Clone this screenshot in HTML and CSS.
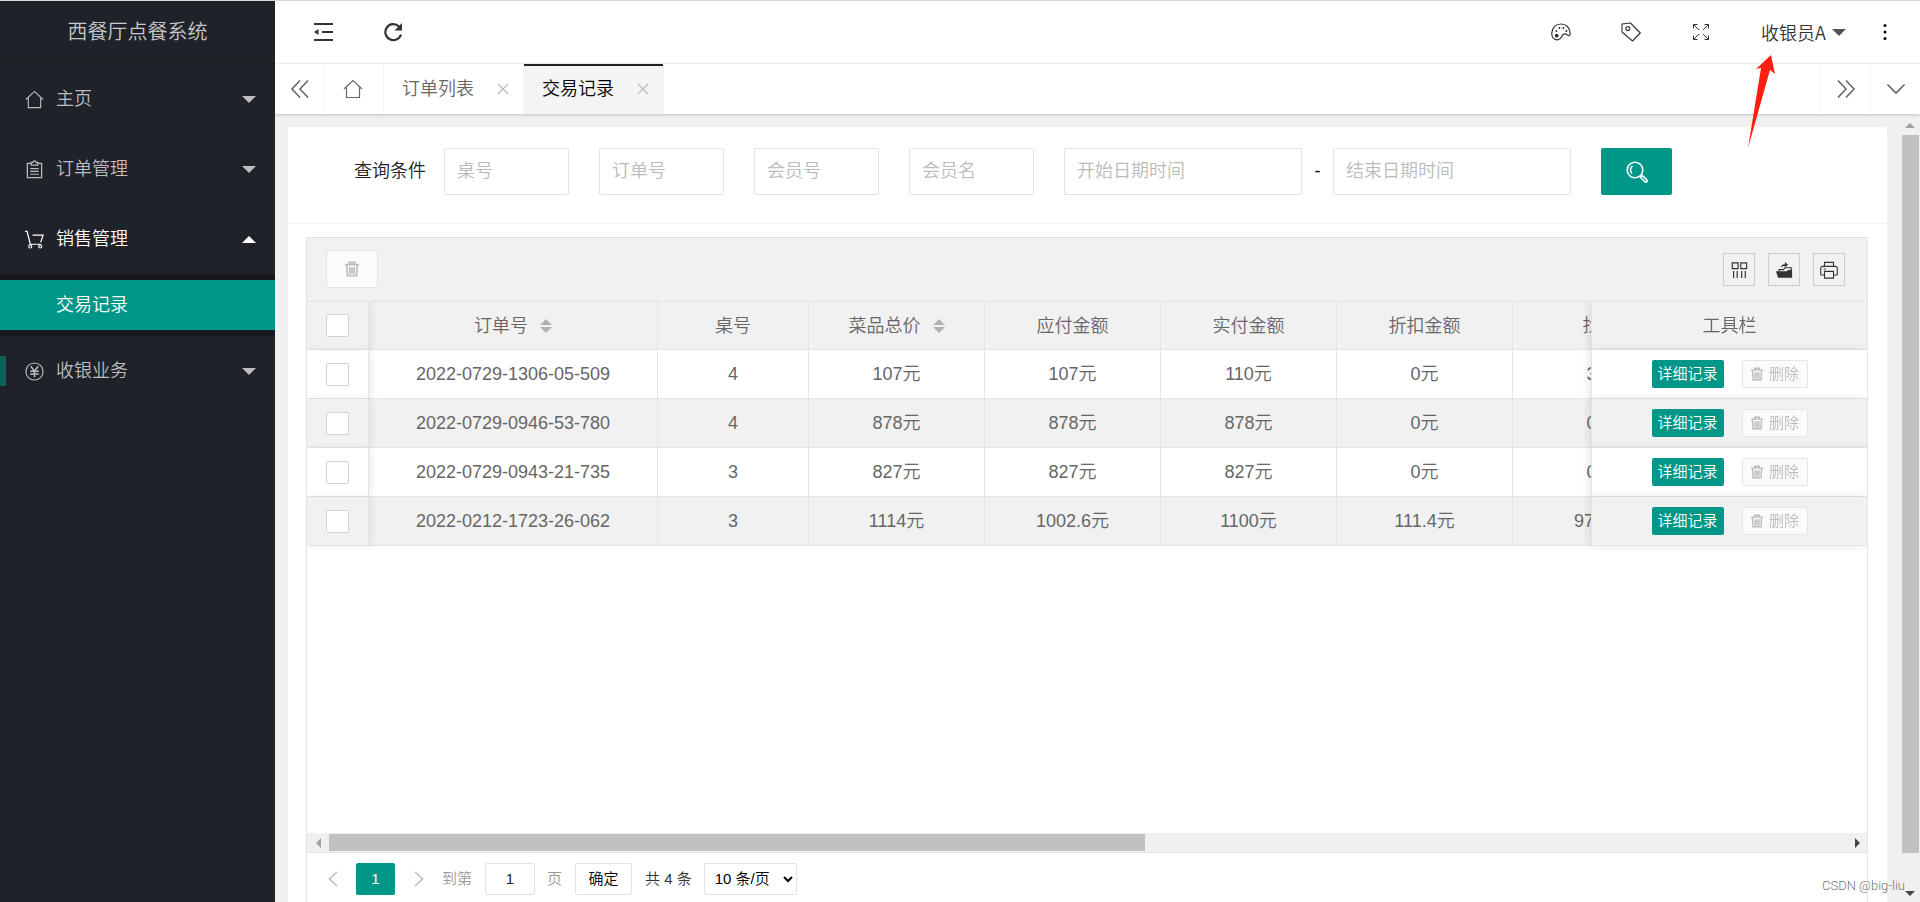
FILE: index.html
```html
<!DOCTYPE html>
<html lang="zh-CN">
<head>
<meta charset="utf-8">
<title>西餐厅点餐系统</title>
<link rel="stylesheet" href="styles.css">
</head>
<body>
<svg class="sprite" aria-hidden="true">
  <symbol id="trash" viewBox="0 0 16 16"><path d="M1 3.600h14M5.400 3.200V1.400h5.200v1.800M2.800 4l.6 10.600h9.200L13.200 4M5.800 6v7M8 6v7M10.200 6v7" fill="none" stroke="currentColor" stroke-width="1.600"/></symbol>
  <symbol id="house" viewBox="0 0 20 20"><path d="M1 10 10 1.500 19 10M3.500 8.500V18.500h13V8.500" fill="none" stroke="currentColor" stroke-width="1.200"/></symbol>
  <symbol id="cross" viewBox="0 0 12 12"><path d="M1 1l10 10M11 1 1 11" fill="none" stroke="currentColor" stroke-width="1.200"/></symbol>
  <symbol id="sort" viewBox="0 0 12 14"><path d="M0 6 6 0l6 6zM0 8h12l-6 6z" fill="currentColor"/></symbol>
</svg>

<aside class="side">
  <div class="logo">西餐厅点餐系统</div>
  <nav class="menu">
    <a class="item" href="#"><svg class="item-icon"><use href="#house"/></svg><span>主页</span><i class="caret"></i></a>
    <a class="item" href="#"><svg class="item-icon" viewBox="0 0 20 20"><path d="M6.500 3.500h-4v15h15v-15h-4M6.500 5.500v-3h2a1.500 1.500 0 0 1 3 0h2v3zM5.500 9h9M5.500 12h9M5.500 15h9" fill="none" stroke="currentColor" stroke-width="1.300"/></svg><span>订单管理</span><i class="caret"></i></a>
    <a class="item open" href="#"><svg class="item-icon" viewBox="0 0 20 20"><path d="M0 1.500h2.200L5.500 15h11M8 5.500h11L16.500 13" fill="none" stroke="currentColor" stroke-width="1.300"/><circle cx="5.500" cy="17.300" r="1.600" fill="none" stroke="currentColor" stroke-width="1.200"/><circle cx="16" cy="17.300" r="1.600" fill="none" stroke="currentColor" stroke-width="1.200"/></svg><span>销售管理</span><i class="caret up"></i></a>
    <div class="submenu"><a class="sub-item" href="#">交易记录</a></div>
    <a class="item marked" href="#"><svg class="item-icon" viewBox="0 0 20 20"><circle cx="10" cy="10" r="9" fill="none" stroke="currentColor" stroke-width="1.200"/><path d="M6 4.500l4 5 4-5M10 9.500V16M5.500 9.800h9M5.500 12.600h9" fill="none" stroke="currentColor" stroke-width="1.500"/></svg><span>收银业务</span><i class="caret"></i></a>
  </nav>
</aside>

<div class="main">
  <header class="header">
    <div class="tools">
      <button class="tool" aria-label="收起菜单"><svg viewBox="0 0 20 20"><path d="M1 2h19M9 10h11M1 18h19" stroke="currentColor" stroke-width="2.200"/><path d="M1 10l4.500-3v6z" fill="currentColor"/></svg></button>
      <button class="tool" aria-label="刷新"><svg viewBox="0 0 20 20"><path d="M18 12.500A8 8 0 1 1 16 4.500" fill="none" stroke="currentColor" stroke-width="2.200"/><path d="M19 1v7.500h-7.500z" fill="currentColor"/></svg></button>
    </div>
    <div class="tools">
      <button class="tool" aria-label="主题"><svg viewBox="0 0 20 20"><path d="M6 17.800C2 17.500.6 14.500.8 11 1.100 5.500 5 2 10 2s9 3.500 9.200 9.500c0 2.600-1.600 2.600-2.600 1.600-1.700-1.700-4-1.600-5 0-1 1.800-1.600 4.900-5.600 4.700z" fill="none" stroke="currentColor" stroke-width="1.200"/><circle cx="5.700" cy="13.700" r="1.900" fill="currentColor"/><circle cx="5.400" cy="9" r="1" fill="currentColor"/><circle cx="8.400" cy="6" r="1" fill="currentColor"/><circle cx="12.300" cy="6" r="1" fill="currentColor"/><circle cx="15.400" cy="9" r="1" fill="currentColor"/></svg></button>
      <button class="tool" aria-label="便签"><svg viewBox="0 0 20 20"><path d="M1 2 9.500 1 19.300 11l-7.800 8L1 10z" fill="none" stroke="currentColor" stroke-width="1.100" stroke-linejoin="round"/><circle cx="6.800" cy="6.600" r="2" fill="none" stroke="currentColor" stroke-width="1.100"/></svg></button>
      <button class="tool" aria-label="全屏"><svg viewBox="0 0 20 20"><path d="M8 8 2.500 2.500M2.500 6.500v-4h4M12 8l5.500-5.500M13.500 2.500h4v4M8 12l-5.500 5.500M2.500 13.500v4h4M12 12l5.500 5.500M13.500 17.500h4v-4" fill="none" stroke="currentColor" stroke-width="1"/></svg></button>
      <button class="user">收银员A<i class="caret"></i></button>
      <button class="more" aria-label="更多"><svg viewBox="0 0 4 20"><circle cx="2" cy="3.500" r="1.500"/><circle cx="2" cy="10" r="1.500"/><circle cx="2" cy="16.500" r="1.500"/></svg></button>
    </div>
  </header>

  <div class="tabs">
    <button class="tab-ctl" aria-label="向左"><svg viewBox="0 0 20 20"><path d="M10 1.500 2 10l8 8.500M18 1.500 10 10l8 8.500" fill="none" stroke="currentColor" stroke-width="1.600"/></svg></button>
    <a class="tab home" href="#" aria-label="首页"><svg><use href="#house"/></svg></a>
    <a class="tab" href="#">订单列表<svg class="close"><use href="#cross"/></svg></a>
    <a class="tab active" href="#">交易记录<svg class="close"><use href="#cross"/></svg></a>
    <button class="tab-ctl first-right" aria-label="向右"><svg viewBox="0 0 20 20"><path d="M2 1.500 10 10l-8 8.500M10 1.500 18 10l-8 8.500" fill="none" stroke="currentColor" stroke-width="1.600"/></svg></button>
    <button class="tab-ctl right" aria-label="展开"><svg viewBox="0 0 20 20"><path d="M1.500 5.500 10 14l8.500-8.500" fill="none" stroke="currentColor" stroke-width="1.600"/></svg></button>
  </div>

  <div class="content">
    <div class="card">
      <form class="search">
        <label for="desk">查询条件</label>
        <input class="field" id="desk" placeholder="桌号">
        <input class="field" aria-label="订单号" placeholder="订单号">
        <input class="field" aria-label="会员号" placeholder="会员号">
        <input class="field" aria-label="会员名" placeholder="会员名">
        <div class="range">
          <input class="field" aria-label="开始日期时间" placeholder="开始日期时间">
          <span class="dash">-</span>
          <input class="field" aria-label="结束日期时间" placeholder="结束日期时间">
        </div>
        <button class="search-btn" type="button" aria-label="查询"><svg viewBox="0 0 22 22"><circle cx="9" cy="9" r="7.800" fill="none" stroke="currentColor" stroke-width="1.600"/><path d="M6.500 5A5 5 0 0 0 6 12.500" fill="none" stroke="currentColor" stroke-width="1.500"/><path d="M15.800 15.800l4 4" stroke="currentColor" stroke-width="4.200" stroke-linecap="round"/><path d="M16.300 16.300l3.400 3.400" stroke="#009688" stroke-width="1.200" stroke-linecap="round"/></svg></button>
      </form>

      <div class="view">
        <div class="bar">
          <button class="del-all" disabled aria-label="删除所选"><svg><use href="#trash"/></svg></button>
          <div class="bar-tools">
            <button class="box" aria-label="筛选列"><svg viewBox="0 0 20 20"><path d="M2.500 2h6.500v6.500H2.500zM12 2h6.500v6.500H12zM4 11v8M8 11v8M13 11v8M17 11v8" fill="none" stroke="currentColor" stroke-width="1.300"/></svg></button>
            <button class="box" aria-label="导出"><svg viewBox="0 0 20 20"><path d="M1 11.500h12l1.500-1.500H19v8.500H3.500z" fill="currentColor"/><path d="M4.500 11.500V9.500h5l1.500-2h7V11" fill="none" stroke="currentColor" stroke-width="1.300"/><path d="M6.500 7.500c.3-3 2-4 4.500-4V1l3.500 3.200L11 7.200V5.500c-2 0-3.500.5-4.500 2z" fill="currentColor"/></svg></button>
            <button class="box" aria-label="打印"><svg viewBox="0 0 20 20"><path d="M5 6V1.500h10V6M5 15.500H1.500A1 1 0 0 1 .8 15V8A2 2 0 0 1 3 6h14a2 2 0 0 1 2.200 2v7a1 1 0 0 1-.7.500H15M5 11.500h10V19H5zM4 8.800h2.500" fill="none" stroke="currentColor" stroke-width="1.200"/></svg></button>
          </div>
        </div>

        <div class="scroller">
          <table class="grid">
            <colgroup><col class="c-check"><col class="c-order"><col class="c-desk"><col class="c-sum"><col class="c-sum"><col class="c-sum"><col class="c-sum"><col class="c-sum"><col class="c-act"></colgroup>
            <thead>
              <tr><th class="pin-left"><input type="checkbox" aria-label="全选"></th><th>订单号<svg class="sort"><use href="#sort"/></svg></th><th>桌号</th><th>菜品总价<svg class="sort"><use href="#sort"/></svg></th><th>应付金额</th><th>实付金额</th><th>折扣金额</th><th>找零</th><th class="pin-right">工具栏</th></tr>
            </thead>
            <tbody>
              <tr><td class="pin-left"><input type="checkbox" aria-label="选择第1行"></td><td>2022-0729-1306-05-509</td><td>4</td><td>107元</td><td>107元</td><td>110元</td><td>0元</td><td>3元</td><td class="pin-right"><div class="acts"><button class="detail">详细记录</button><button class="del" disabled><svg><use href="#trash"/></svg>删除</button></div></td></tr>
              <tr><td class="pin-left"><input type="checkbox" aria-label="选择第2行"></td><td>2022-0729-0946-53-780</td><td>4</td><td>878元</td><td>878元</td><td>878元</td><td>0元</td><td>0元</td><td class="pin-right"><div class="acts"><button class="detail">详细记录</button><button class="del" disabled><svg><use href="#trash"/></svg>删除</button></div></td></tr>
              <tr><td class="pin-left"><input type="checkbox" aria-label="选择第3行"></td><td>2022-0729-0943-21-735</td><td>3</td><td>827元</td><td>827元</td><td>827元</td><td>0元</td><td>0元</td><td class="pin-right"><div class="acts"><button class="detail">详细记录</button><button class="del" disabled><svg><use href="#trash"/></svg>删除</button></div></td></tr>
              <tr><td class="pin-left"><input type="checkbox" aria-label="选择第4行"></td><td>2022-0212-1723-26-062</td><td>3</td><td>1114元</td><td>1002.6元</td><td>1100元</td><td>111.4元</td><td>97.4元</td><td class="pin-right"><div class="acts"><button class="detail">详细记录</button><button class="del" disabled><svg><use href="#trash"/></svg>删除</button></div></td></tr>
            </tbody>
          </table>
        </div>

        <div class="hbar"><i class="arr left"></i><div class="rail"><div class="thumb"></div></div><i class="arr right"></i></div>

        <div class="pager">
          <button class="step" aria-label="上一页"><svg viewBox="0 0 10 16"><path d="M9 1 1.500 8 9 15" fill="none" stroke="currentColor" stroke-width="1.500"/></svg></button>
          <span class="page">1</span>
          <button class="step" aria-label="下一页"><svg viewBox="0 0 10 16"><path d="M1 1l7.500 7L1 15" fill="none" stroke="currentColor" stroke-width="1.500"/></svg></button>
          <label class="dim" for="goto">到第</label>
          <input class="goto" id="goto" value="1">
          <span class="dim">页</span>
          <button class="confirm">确定</button>
          <span class="total">共 4 条</span>
          <select class="size" aria-label="每页条数"><option>10 条/页</option></select>
        </div>
      </div>
    </div>
    <div class="vbar"><i class="arr up"></i><div class="vthumb"></div><i class="arr down"></i></div>
  </div>
</div>

<svg class="pointer" viewBox="0 0 28 94" aria-hidden="true"><path d="M24 0 28 19 23 15 1 93 14 13 9 14z" fill="#ff1f10"/></svg>
<div class="mark">CSDN @big-liu</div>
</body>
</html>
```
FILE: styles.css
```css
* { box-sizing: border-box; }
body {
  margin: 0;
  height: 100vh;
  display: flex;
  overflow: hidden;
  border-top: 1px solid #d8d8d8;
  background: #f0f0f0;
  color: #333;
  font: 350 18px/24px "Liberation Sans", "Noto Sans CJK SC", sans-serif;
}
button, input, select { font: inherit; color: inherit; margin: 0; }
button { padding: 0; border: 0; background: none; }
a { color: inherit; text-decoration: none; }
svg { display: block; flex: none; }
.sprite { position: absolute; width: 0; height: 0; }

.caret {
  border: 7px solid transparent;
  border-top-color: currentColor;
  border-bottom-width: 0;
}
.caret.up { border-top-width: 0; border-bottom: 7px solid currentColor; }

.side { width: 275px; flex: none; background: #20222a; color: #bcbdbf; }
.logo {
  height: 63px;
  display: flex;
  align-items: center;
  justify-content: center;
  font-size: 20px;
  color: #c8c9cb;
  border-bottom: 1px solid #1a1c22;
}
.item { display: flex; align-items: center; gap: 12px; height: 70px; padding: 0 19px 0 25px; }
.item .caret { margin-left: auto; }
.item-icon { width: 19px; height: 19px; }
.open { color: #fff; }
.marked { background: linear-gradient(#10605c, #10605c) 0 50% / 6px 30px no-repeat; }
.submenu { padding: 6px 0; background: #16181d; }
.sub-item { display: flex; align-items: center; height: 50px; padding-left: 56px; background: #009688; color: #fff; }

.main { flex: 1; min-width: 0; display: flex; flex-direction: column; }
.header { display: flex; justify-content: space-between; height: 63px; flex: none; padding: 0 10px 0 13px; background: #fff; border-bottom: 1px solid #f4f4f4; }
.tools { display: flex; align-items: center; }
.tool { width: 70px; height: 62px; display: grid; place-items: center; }
.tool svg { width: 20px; height: 20px; }
.user { display: flex; align-items: center; gap: 6px; width: 124px; padding-left: 25px; font-family: "Noto Sans CJK SC", sans-serif; }
.user .caret { color: #555; }
.more { width: 50px; display: grid; place-items: center; }
.more svg { width: 4px; height: 20px; }

.tabs { display: flex; height: 50px; flex: none; background: #fff; box-shadow: 0 1px 3px rgba(0, 0, 0, .2); position: relative; color: #666; }
.tab-ctl { width: 50px; display: grid; place-items: center; border-right: 1px solid #f4f4f4; }
.tab-ctl svg { width: 20px; height: 20px; }
.first-right { margin-left: auto; }
.first-right, .right { border-right: 0; border-left: 1px solid #f4f4f4; }
.tab { width: 140px; display: flex; align-items: center; gap: 23px; padding-left: 18px; border-right: 1px solid #f4f4f4; }
.home { width: 59px; }
.home svg { width: 20px; height: 20px; }
.close { width: 12px; height: 12px; color: #bbb; }
.active { background: #f4f4f4; color: #000; box-shadow: inset 0 2px #222; }

.content { flex: 1; min-height: 0; display: flex; padding: 13px 0 0 13px; justify-content: space-between; }
.card { flex: 1; display: flex; flex-direction: column; min-width: 0; background: #fff; border-radius: 2px 2px 0 0; }
.search { display: flex; gap: 30px; height: 97px; flex: none; padding: 21px 19px 0 66px; border-bottom: 1px solid #f4f4f4; }
.search label { padding-top: 11px; margin-right: -12px; color: #222; }
.field { width: 125px; height: 47px; padding: 0 12px; border: 1px solid #e2e2e2; border-radius: 2px; background: #fff; }
.field::placeholder { color: #bbb; opacity: 1; }
.range { display: flex; }
.range .field { width: 238px; }
.dash { width: 31px; text-align: center; line-height: 47px; color: #000; }
.search-btn { width: 71px; height: 47px; display: grid; place-items: center; background: #009688; color: #fff; border-radius: 2px; }
.search-btn svg { width: 22px; height: 22px; }

.view { flex: 1; min-height: 0; display: flex; flex-direction: column; margin: 13px 19px 0 18px; border: 1px solid #e4e4e4; border-bottom: 0; }
.bar { display: flex; justify-content: space-between; height: 64px; flex: none; padding: 12px 22px 0 19px; background: #f1f1f1; border-bottom: 1px solid #e4e4e4; }
.del-all { width: 52px; height: 38px; display: grid; place-items: center; border: 1px solid #e4e4e4; border-radius: 2px; background: #fbfbfb; color: #bbb; }
.del-all svg { width: 16px; height: 16px; }
.bar-tools { display: flex; gap: 13px; padding-top: 3px; }
.box { width: 32px; height: 33px; display: grid; place-items: center; border: 1px solid #ccc; color: #333; }
.box svg { width: 18px; height: 18px; }

.scroller { flex: 1; min-height: 0; overflow: hidden; }
.grid { width: 1658px; table-layout: fixed; border-spacing: 0; color: #666; }
.c-check { width: 62px; }
.c-order { width: 289px; }
.c-desk { width: 151px; }
.c-sum { width: 176px; }
.c-act { width: 276px; }
.grid th, .grid td { height: 49px; padding: 0; text-align: center; font-weight: inherit; border: solid #e4e4e4; border-width: 0 1px 1px 0; background: #fff; }
.grid th, .grid tr:nth-child(even) td { background: #f1f1f1; }
.grid th { height: 48px; }
.grid .pin-left { position: sticky; left: 0; z-index: 1; box-shadow: 2px 0 8px rgba(0, 0, 0, .08); }
.grid .pin-right { position: sticky; right: 0; z-index: 1; border-right: 0; border-left: 1px solid #e4e4e4; box-shadow: -2px 0 8px rgba(0, 0, 0, .1); }
.grid input { appearance: none; display: block; width: 23px; height: 23px; margin-left: 19px; border: 1px solid #d2d2d2; border-radius: 2px; background: #fff; }
.sort { display: inline-block; width: 12px; height: 14px; margin-left: 12px; vertical-align: -1px; color: #b2b2b2; }
.acts { display: flex; justify-content: center; gap: 18px; font-size: 15px; }
.detail { width: 72px; height: 28px; background: #009688; color: #fff; border-radius: 2px; }
.del { width: 66px; height: 28px; display: flex; align-items: center; justify-content: center; gap: 5px; border: 1px solid #e6e6e6; border-radius: 2px; background: #fbfbfb; color: #bbb; }
.del svg { width: 14px; height: 14px; }

.hbar { display: flex; align-items: center; height: 20px; flex: none; background: #f0f0f0; border-bottom: 1px solid #e4e4e4; }
.rail { flex: 1; }
.thumb { width: 54%; height: 17px; background: #c1c1c1; }
.arr { border: 5px solid transparent; }
.arr.left { margin: 0 8px 0 4px; border-right-color: #a0a0a0; }
.arr.right { margin: 0 2px 0 15px; border-left-color: #444; }

.pager { display: flex; align-items: center; height: 49px; flex: none; padding: 2px 0 0 21px; font-size: 15px; color: #333; }
.step { width: 10px; color: #bbb; }
.step svg { width: 10px; height: 16px; }
.page { width: 39px; margin: 0 19px 0 18px; line-height: 32px; text-align: center; background: #009688; color: #fff; border-radius: 2px; }
.dim { color: #999; }
.pager label { margin-left: 18px; }
.goto { width: 50px; height: 32px; margin: 0 12px 0 13px; padding: 0; text-align: center; border: 1px solid #e2e2e2; border-radius: 2px; color: #222; }
.confirm { width: 57px; height: 32px; margin: 0 13px; border: 1px solid #e2e2e2; border-radius: 2px; color: #000; }
.size { width: 93px; height: 32px; margin-left: 12px; padding: 0 0 0 6px; border: 1px solid #e2e2e2; border-radius: 2px; background: #fff; color: #000; }

.vbar { width: 33px; flex: none; display: flex; flex-direction: column; align-items: center; padding: 0 1px 6px 14px; }
.vthumb { flex: 1; width: 17px; margin: 7px 0 38px; background: #c1c1c1; }
.arr.up { margin-top: -9px; border-bottom-color: #a0a0a0; }
.arr.down { border-top-color: #444; border-bottom-width: 0; }

.pointer { position: absolute; right: 145px; top: 55px; width: 28px; height: 94px; }
.mark { position: absolute; right: 15px; bottom: 6px; font: 300 13px/20px Roboto, sans-serif; color: #777; }
```
